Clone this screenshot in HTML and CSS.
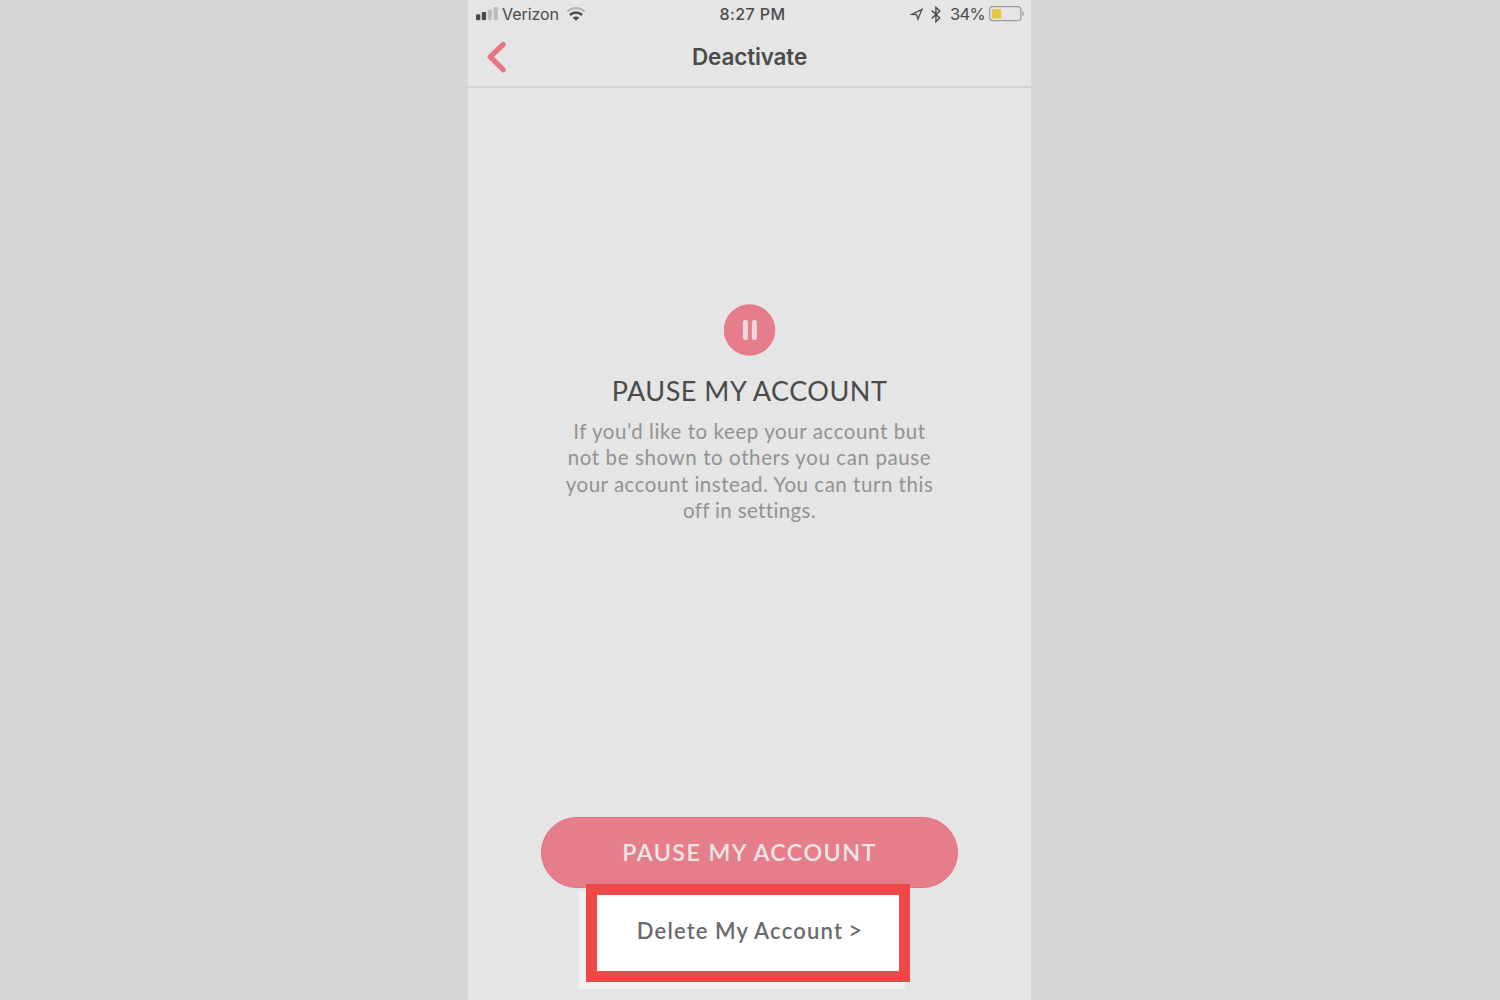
FILE: index.html
```html
<!DOCTYPE html>
<html lang="en">
<head>
<meta charset="utf-8">
<title>Deactivate</title>
<link rel="stylesheet" href="styles.css">
</head>
<body>
<main class="phone">
  <header class="top">
    <div class="status">
      <div class="status-left">
        <svg class="signal" width="22" height="14" viewBox="0 0 22 14"><rect x="0" y="7.3" width="4.3" height="5.9" rx="1.1" fill="#4a4a4a"/><rect x="5.8" y="5" width="4.3" height="8.2" rx="1.1" fill="#4a4a4a"/><rect x="11.8" y="2.6" width="4.1" height="10.6" rx="1.1" fill="#bcbcbc"/><rect x="17.5" y="0" width="4.2" height="13.2" rx="1.1" fill="#bcbcbc"/></svg>
        <span class="carrier">Verizon</span>
        <svg class="wifi" width="20" height="15" viewBox="0 0 20 15" fill="none"><path d="M1.2 4.7C6.2-.1 13.8-.1 18.8 4.7" stroke="#b7b7b7" stroke-width="2.3"/><path d="M4 8C7.4 4.7 12.6 4.7 16 8" stroke="#4a4a4a" stroke-width="2.5"/><path d="M6.7 10.6c1.8-1.6 4.8-1.6 6.6 0L10 13.7z" fill="#4a4a4a"/></svg>
      </div>
      <span class="clock">8:27 PM</span>
      <div class="status-right">
        <svg class="location" width="14" height="13" viewBox="0 0 14 13" fill="none" stroke="#505050" stroke-width="1.3" stroke-linejoin="miter"><path d="M12 1.3 1.8 6.4l4.9.3 1.2 4.5z"/></svg>
        <svg class="bluetooth" width="10" height="17" viewBox="0 0 10 17" fill="none" stroke="#4a4a4a" stroke-width="1.4"><path d="M.7 4.6 8.8 12 4.9 15.6V1.4L8.8 5 .7 12.4"/></svg>
        <span class="percent">34%</span>
        <svg class="battery" width="36" height="16" viewBox="0 0 36 16"><rect x=".7" y=".7" width="31.2" height="14" rx="3.2" fill="none" stroke="#999b98" stroke-width="1.2"/><rect x="2.9" y="3" width="9.3" height="9.4" fill="#e6c543"/><path d="M33.5 5.3c1.6.7 1.6 4.1 0 4.8z" fill="#8e8e8e"/></svg>
      </div>
    </div>
    <nav class="nav">
      <svg class="back" width="20" height="32" viewBox="0 0 20 32" fill="none" stroke="#e97486" stroke-width="5.2" stroke-linecap="round" stroke-linejoin="round"><path d="M16.2 3.5 3.2 15.9 16.2 28.7"/></svg>
      <h1 class="title">Deactivate</h1>
    </nav>
  </header>
  <section class="pause">
    <svg class="pause-icon" width="52" height="52" viewBox="0 0 52 52"><circle cx="25.5" cy="26" r="25.3" fill="#e67d8b" stroke="#e76e80" stroke-width=".8"/><rect x="18.9" y="16" width="5" height="20" rx="2.2" fill="#ead9dc"/><rect x="27.9" y="16" width="5" height="20" rx="2.2" fill="#ead9dc"/></svg>
    <h2 class="heading">PAUSE MY ACCOUNT</h2>
    <p class="copy"><span class="line line-1">If you’d like to keep your account but</span><span class="line line-2">not be shown to others you can pause</span><span class="line line-3">your account instead. You can turn this</span><span class="line line-4">off in settings.</span></p>
  </section>
  <section class="actions">
    <button class="pause-button">PAUSE MY ACCOUNT</button>
    <a class="delete">Delete My Account <span class="more">&gt;</span></a>
  </section>
</main>
</body>
</html>
```
FILE: styles.css
```css
* { box-sizing: border-box; }
body { margin: 0; height: 1000px; overflow: hidden; background: #d6d6d6; font-family: Lato, sans-serif; }
.phone { width: 563px; height: 1000px; margin-left: 468px; background: #e5e5e5; display: flex; flex-direction: column; }
.top { height: 88px; border-bottom: 2px solid #d3d3d3; color: #4a4a4a; font-family: Inter, sans-serif; }
.status { height: 28px; padding: 0 6px 0 8px; display: grid; grid-template-columns: 1fr auto 1fr; align-items: center; font-size: 16px; line-height: 28px; }
.status-left, .status-right { display: flex; align-items: center; }
.status-right { justify-content: flex-end; }
.carrier { margin-left: 4px; letter-spacing: -.05px; }
.wifi { margin-left: 7px; }
.clock { padding-left: 4px; font-weight: 500; font-size: 16px; letter-spacing: .4px; }
.bluetooth { margin-left: 7px; }
.percent { margin: 0 4px 0 9px; font-size: 16.5px; letter-spacing: -.7px; }
.nav { height: 58px; padding-left: 19px; display: grid; grid-template-columns: 20px 1fr 39px; align-items: center; }
.title { margin: 0; text-align: center; font-size: 22.5px; line-height: 30px; font-weight: 600; letter-spacing: -.15px; }
.pause { padding-top: 216px; height: 729px; display: flex; flex-direction: column; align-items: center; }
.heading { margin: 17px 0 0; font-size: 27px; line-height: 36px; font-weight: 400; letter-spacing: .5px; color: #4a4a4a; white-space: nowrap; }
.copy { margin: 9px 0 0; font-size: 20.5px; line-height: 26.4px; color: #929292; text-align: center; }
.line { display: block; white-space: nowrap; letter-spacing: .58px; }
.line-2 { letter-spacing: .6px; }
.line-3 { letter-spacing: .52px; }
.line-4 { letter-spacing: .35px; }
.actions { display: flex; flex-direction: column; align-items: center; }
.pause-button { width: 417px; height: 71px; flex: none; padding: 0; border: 1px solid #e66d80; border-radius: 36px; background: #e67d8b; color: #e8e5e5; font: 600 23.3px/69px Lato, sans-serif; letter-spacing: 1.4px; }
.delete { width: 324px; height: 98px; margin: -4px 3px 0 0; border: 11px solid #f04848; background: #fff; box-shadow: -7px 7px #f0f0f0, -5px 7px #f0f0f0; color: #6b6b6b; font-size: 22px; line-height: 72px; font-weight: 600; letter-spacing: 1.2px; word-spacing: -.5px; padding-left: 3px; text-align: center; position: relative; white-space: nowrap; }
.more { margin-left: -1px; font-weight: 500; font-size: 24px; line-height: 1; letter-spacing: 0; }
```
